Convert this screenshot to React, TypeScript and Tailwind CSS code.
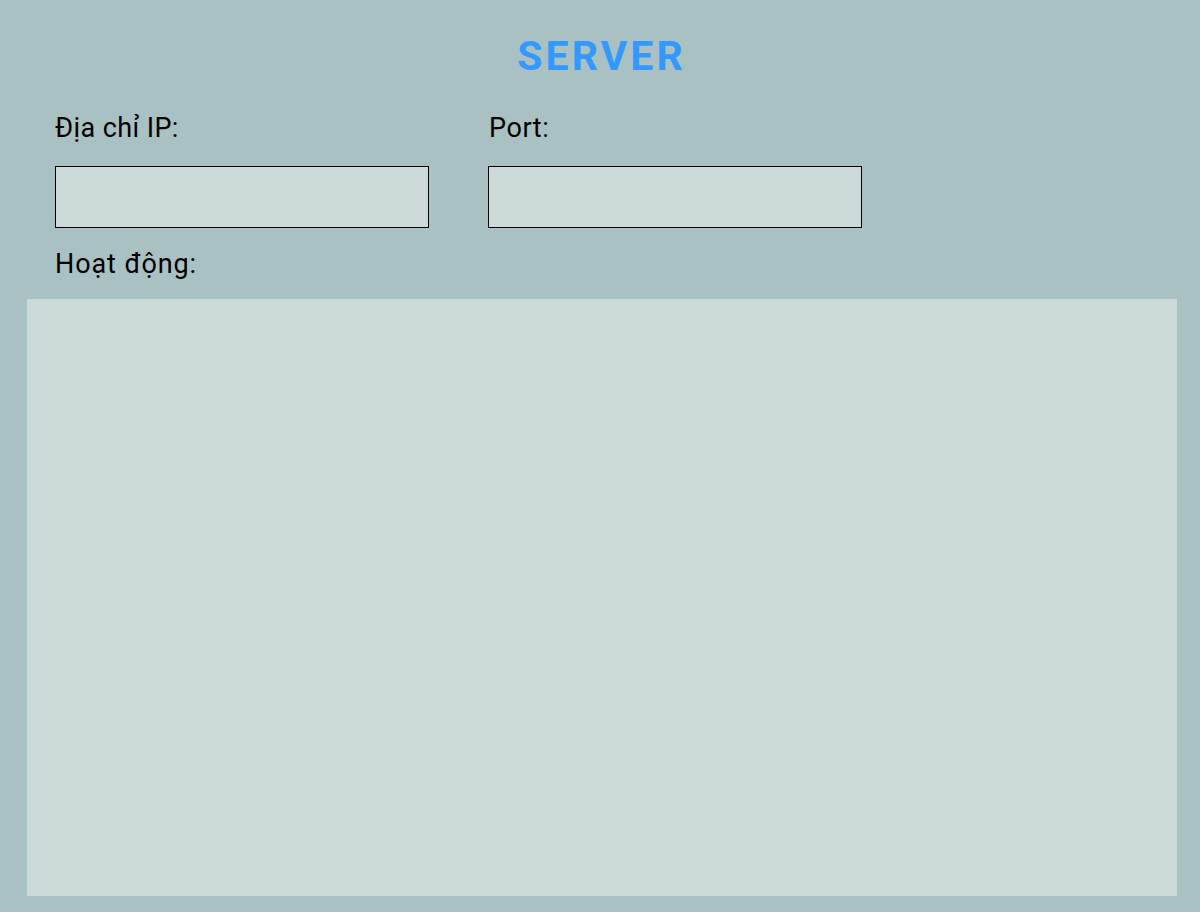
export default function App() {
  return (
    <div
      className="h-[912px] w-[1200px] bg-[#a9c1c2] flex flex-col text-black"
      style={{ fontFamily: "Roboto, 'Noto Sans', sans-serif" }}
    >
      {/* title */}
      <h1 className="mt-[33px] h-[46px] pl-[3px] text-center text-[41px] font-bold leading-[46px] tracking-[3px] text-[#3399ff]">
        SERVER
      </h1>

      {/* fields */}
      <div className="mt-[33px] flex gap-[59px] pl-[55px]">
        <div className="flex w-[374px] flex-col">
          <label className="h-[32px] text-[27px] leading-[32px] tracking-[0.4px]">Địa chỉ IP:</label>
          <input className="mt-[22px] h-[62px] w-[374px] border border-black bg-[#cbd9d9] outline-none" />
        </div>
        <div className="flex w-[374px] flex-col">
          <label className="h-[32px] pl-[1px] text-[27px] leading-[32px] tracking-[0.6px]">Port:</label>
          <input className="mt-[22px] h-[62px] w-[374px] border border-black bg-[#cbd9d9] outline-none" />
        </div>
      </div>

      <div className="mt-[20px] h-[32px] pl-[55px] text-[27px] leading-[32px] tracking-[0.9px]">Hoạt động:</div>

      {/* activity log */}
      <div className="ml-[27px] mr-[23px] mt-[19px] h-[597px] bg-[#cbd9d9]" />
    </div>
  );
}
